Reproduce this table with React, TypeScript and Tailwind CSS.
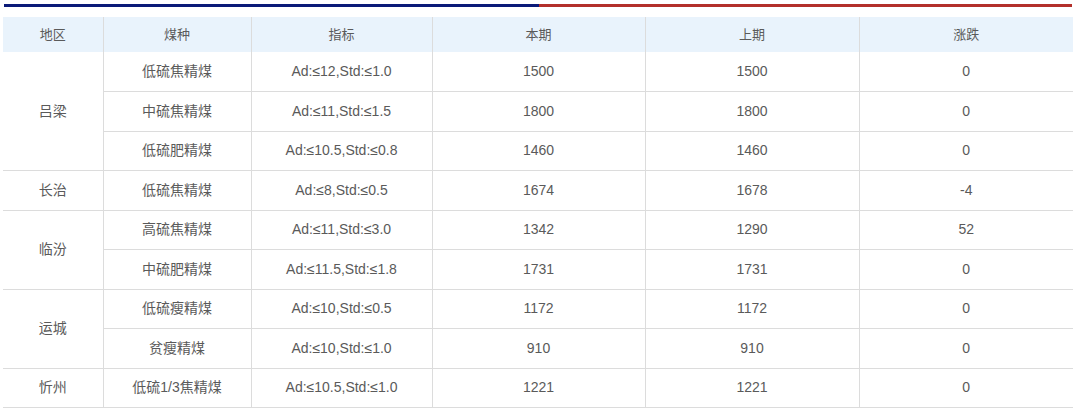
const rows = [
  { region: "吕梁", span: 3, coal: "低硫焦精煤", spec: "Ad:≤12,Std:≤1.0", cur: "1500", prev: "1500", diff: "0" },
  { coal: "中硫焦精煤", spec: "Ad:≤11,Std:≤1.5", cur: "1800", prev: "1800", diff: "0" },
  { coal: "低硫肥精煤", spec: "Ad:≤10.5,Std:≤0.8", cur: "1460", prev: "1460", diff: "0" },
  { region: "长治", span: 1, coal: "低硫焦精煤", spec: "Ad:≤8,Std:≤0.5", cur: "1674", prev: "1678", diff: "-4" },
  { region: "临汾", span: 2, coal: "高硫焦精煤", spec: "Ad:≤11,Std:≤3.0", cur: "1342", prev: "1290", diff: "52" },
  { coal: "中硫肥精煤", spec: "Ad:≤11.5,Std:≤1.8", cur: "1731", prev: "1731", diff: "0" },
  { region: "运城", span: 2, coal: "低硫瘦精煤", spec: "Ad:≤10,Std:≤0.5", cur: "1172", prev: "1172", diff: "0" },
  { coal: "贫瘦精煤", spec: "Ad:≤10,Std:≤1.0", cur: "910", prev: "910", diff: "0" },
  { region: "忻州", span: 1, coal: "低硫1/3焦精煤", spec: "Ad:≤10.5,Std:≤1.0", cur: "1221", prev: "1221", diff: "0" },
];

const cell = "border-b border-[#dcdcdc] text-center align-middle";
const vline = "border-l border-[#dcdcdc]";

export default function App() {
  return (
    <div
      className="w-[1080px] h-[412px] bg-white px-[3px] pt-[4px] text-[14px] text-[#5a5a5a]"
      style={{ fontFamily: '"Liberation Sans", "Noto Sans CJK SC", sans-serif' }}
    >
      {/* top bar */}
      <div className="flex h-[3px] w-[1068px] ml-[1px]">
        <div className="w-[535px] bg-[#0b1a78]" />
        <div className="flex-1 bg-[#b3302b]" />
      </div>

      <table className="mt-[10px] w-[1070px] border-collapse table-fixed">
        <colgroup>
          <col className="w-[100px]" />
          <col className="w-[148px]" />
          <col className="w-[181px]" />
          <col className="w-[213px]" />
          <col className="w-[214px]" />
          <col className="w-[214px]" />
        </colgroup>
        <thead>
          <tr className="h-[35px] bg-[#e9f3fc] text-[13px]">
            <th className="font-normal text-center">地区</th>
            <th className={`font-normal text-center ${vline}`}>煤种</th>
            <th className={`font-normal text-center ${vline}`}>指标</th>
            <th className={`font-normal text-center ${vline}`}>本期</th>
            <th className={`font-normal text-center ${vline}`}>上期</th>
            <th className={`font-normal text-center ${vline}`}>涨跌</th>
          </tr>
        </thead>
        <tbody>
          {rows.map((r, i) => (
            <tr key={i} className="h-[39.5px]">
              {r.region && (
                <td rowSpan={r.span} className={cell}>
                  {r.region}
                </td>
              )}
              <td className={`${cell} ${vline}`}>{r.coal}</td>
              <td className={`${cell} ${vline}`}>{r.spec}</td>
              <td className={`${cell} ${vline}`}>{r.cur}</td>
              <td className={`${cell} ${vline}`}>{r.prev}</td>
              <td className={`${cell} ${vline}`}>{r.diff}</td>
            </tr>
          ))}
        </tbody>
      </table>
    </div>
  );
}
